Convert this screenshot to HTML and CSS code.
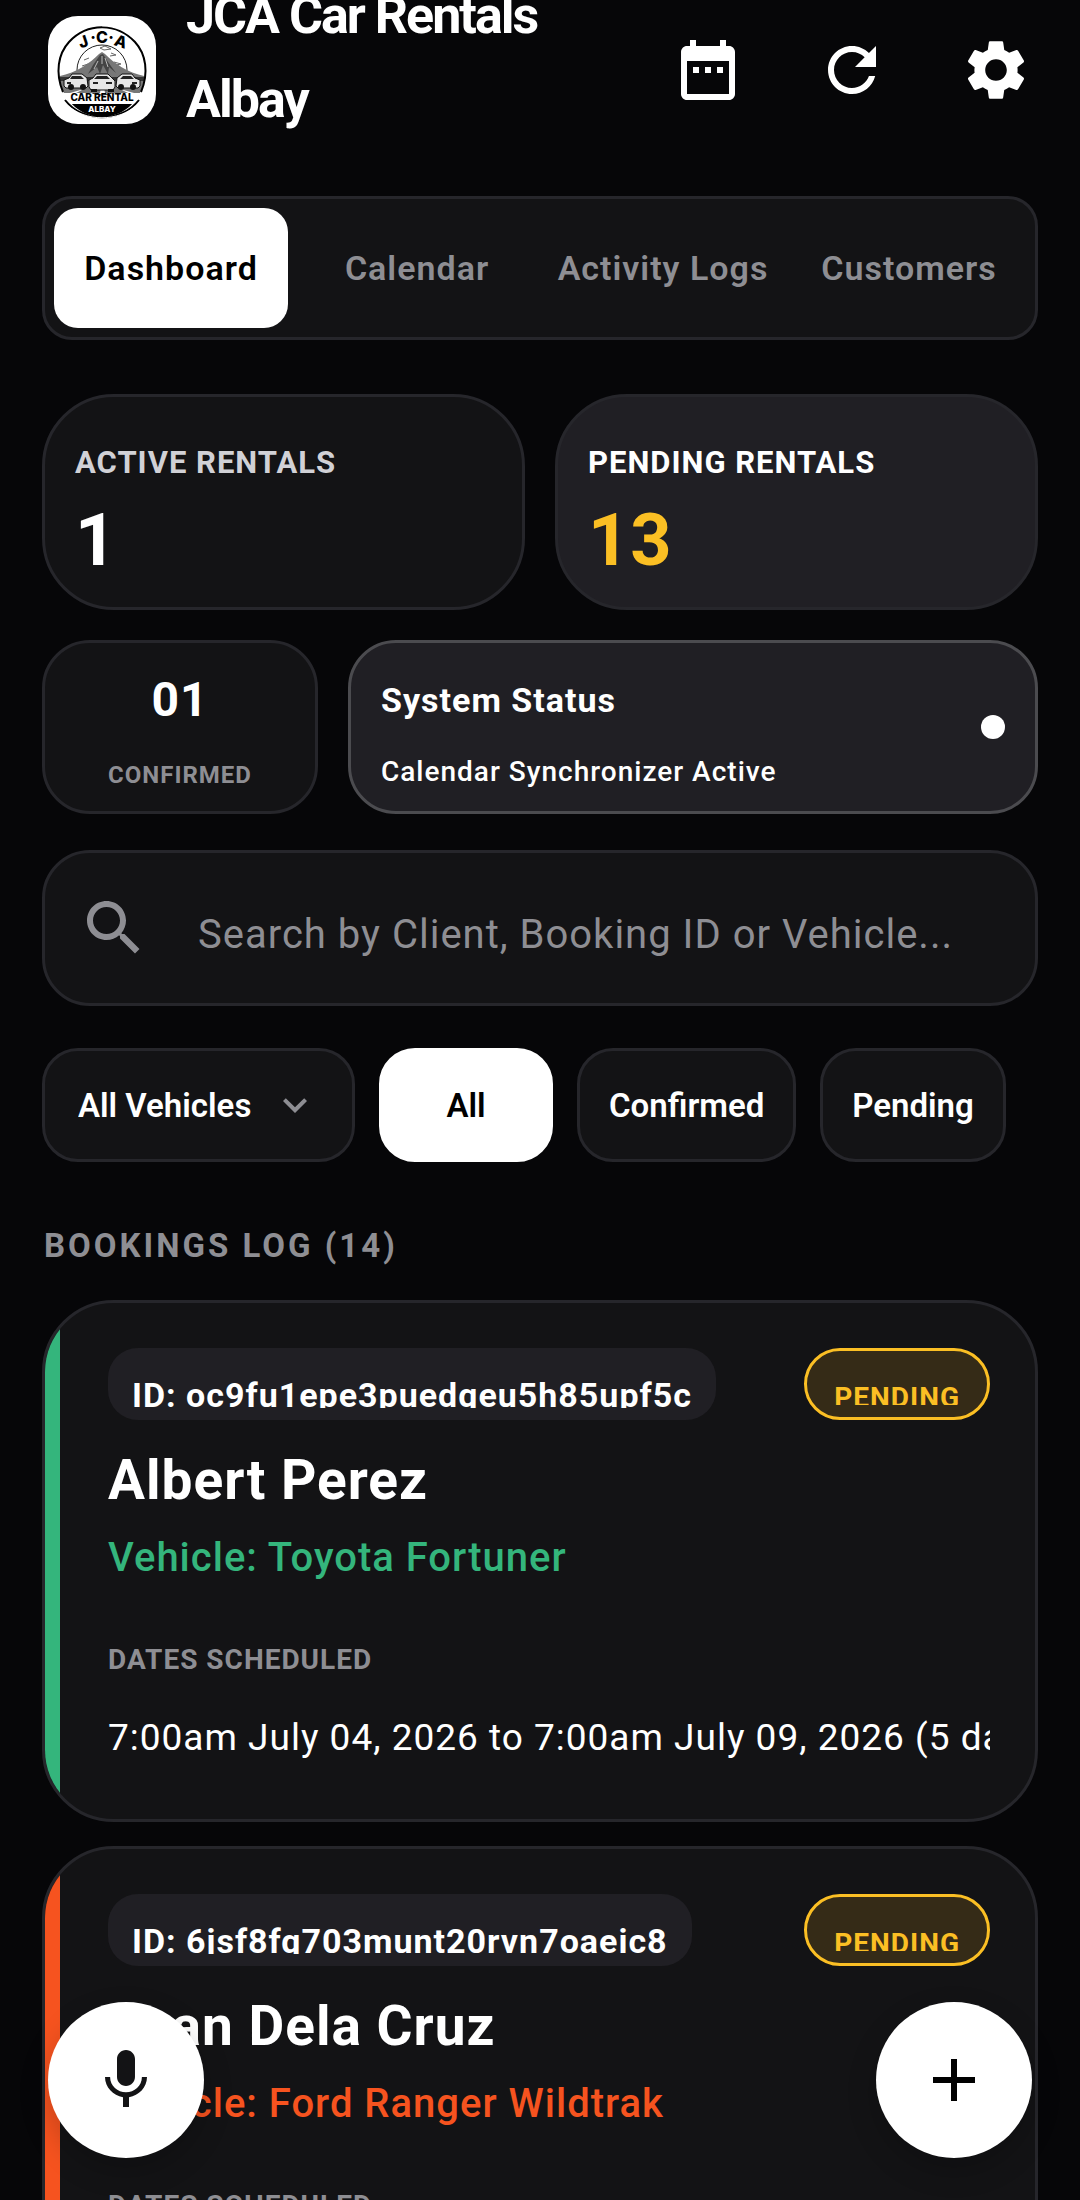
FILE: index.html
```html
<!DOCTYPE html>
<html lang="en">
<head>
    <meta charset="UTF-8">
    <meta name="viewport" content="width=device-width, initial-scale=1.0">
    <title>JCA Car Rentals Albay</title>
    <link rel="stylesheet" href="styles.css">
</head>
<body>
    <div class="app">
        <header class="header">
            <svg class="logo" viewBox="0 0 108 108" role="img" aria-label="JCA Car Rental Albay logo">
                <defs>
                    <clipPath id="badge"><ellipse cx="54" cy="56" rx="43" ry="45"/></clipPath>
                </defs>
                <rect width="108" height="108" fill="#fff"/>
                <circle cx="54" cy="54" r="25" fill="#fff" stroke="#222" stroke-width="1"/>
                <path d="M36 44l5-2M63 37l5 2-6 1M66 46l7 2-5 1M40 48l-6 2M52 32l5-2 6 3-7 1z" fill="none" stroke="#666" stroke-width="1"/>
                <g clip-path="url(#badge)">
                    <path d="M8 61C28 57 41 48 51 38l3-2 3 2c10 10 23 19 43 23v16H8z" fill="#777"/>
                    <path d="M52 39l-7 10-5 9 9-7 3 7 3-9 5 9 1-7 7 6-8-11-5-8z" fill="#444"/>
                    <path d="M50 45l-4 8M57 42l3 9M54 40v8" stroke="#bbb" stroke-width="1"/>
                    <path d="M8 61h92v4H8z" fill="#333"/>
                    <path d="M53 71h3l1 6h-5zM36 73l-14 4h6zM72 73l14 4h-6z" fill="#fff"/>
                    <path d="M8 88h92v20H8z" fill="#000"/>
                </g>
                <g fill="#e6e6e6" stroke="#111" stroke-width="1">
                    <path d="M16 70v-6l5-2 3-4h10l5 4 1 8-2 2H18z"/>
                    <path d="M92 70v-6l-5-2-3-4H74l-5 4-1 8 2 2h20z"/>
                    <path d="M41 71v-7l4-2 3-4h12l4 4 3 3v6l-2 3H43z"/>
                </g>
                <path d="M24 60h9l3 3H22zM75 60h8l3 3H72zM49 60h10l3 3H46zM45 66h5v2h-5zM58 66h6v2h-6zM19 66h4v2h-4zM84 66h5v2h-5z" fill="#222"/>
                <path d="M20 71a3 3 0 1 0 6 0a3 3 0 1 0-6 0M32 71a3 3 0 1 0 6 0a3 3 0 1 0-6 0M43 73h6v3h-6zM60 73h6v3h-6zM70 71a3 3 0 1 0 6 0a3 3 0 1 0-6 0M82 71a3 3 0 1 0 6 0a3 3 0 1 0-6 0" fill="#111"/>
                <path d="M15 76C7 57 10 38 21 26C40 6 69 7 87 26C98 38 101 57 93 76" fill="none" stroke="#000" stroke-width="2"/>
                <path d="M17 84C35 107 73 107 91 84" fill="none" stroke="#000" stroke-width="2"/>
                <path d="M19 89C37 106 71 106 89 89" fill="none" stroke="#fff" stroke-width="1"/>
                <g class="logo-text" text-anchor="middle">
                    <text class="logo-jca" x="37" y="31" transform="rotate(-18 37 31)">J</text>
                    <text class="logo-jca" x="45" y="27">·</text>
                    <text class="logo-jca" x="54" y="27">C</text>
                    <text class="logo-jca" x="63" y="27">·</text>
                    <text class="logo-jca" x="71" y="31" transform="rotate(18 71 31)">A</text>
                    <text class="logo-rental" x="54" y="85">CAR RENTAL</text>
                    <text class="logo-albay" x="54" y="96">ALBAY</text>
                </g>
            </svg>
            <h1 class="title">JCA Car Rentals Albay</h1>
            <button type="button" class="icon-button" aria-label="Calendar">
                <svg class="icon" viewBox="0 0 24 24"><path d="M9 11H7v2h2v-2zm4 0h-2v2h2v-2zm4 0h-2v2h2v-2zm2-7h-1V2h-2v2H8V2H6v2H5c-1.11 0-1.99.9-1.99 2L3 20c0 1.1.89 2 2 2h14c1.1 0 2-.9 2-2V6c0-1.1-.9-2-2-2zm0 16H5V9h14v11z"/></svg>
            </button>
            <button type="button" class="icon-button" aria-label="Refresh">
                <svg class="icon" viewBox="0 0 24 24"><path d="M17.65 6.35C16.2 4.9 14.21 4 12 4c-4.42 0-7.99 3.58-7.99 8s3.57 8 7.99 8c3.73 0 6.84-2.55 7.73-6h-2.08c-.82 2.33-3.04 4-5.65 4-3.31 0-6-2.69-6-6s2.69-6 6-6c1.66 0 3.14.69 4.22 1.78L13 11h7V4l-2.35 2.35z"/></svg>
            </button>
            <button type="button" class="icon-button" aria-label="Settings">
                <svg class="icon" viewBox="0 0 24 24"><path d="M19.14 12.94c.04-.3.06-.61.06-.94 0-.32-.02-.64-.07-.94l2.03-1.58c.18-.14.23-.41.12-.61l-1.92-3.32c-.12-.22-.37-.29-.59-.22l-2.39.96c-.5-.38-1.03-.7-1.62-.94l-.36-2.54c-.04-.24-.24-.41-.48-.41h-3.84c-.24 0-.43.17-.47.41l-.36 2.54c-.59.24-1.13.57-1.62.94l-2.39-.96c-.22-.08-.47 0-.59.22L2.74 8.87c-.12.21-.08.47.12.61l2.03 1.58c-.05.3-.09.63-.09.94s.02.64.07.94l-2.03 1.58c-.18.14-.23.41-.12.61l1.92 3.32c.12.22.37.29.59.22l2.39-.96c.5.38 1.03.7 1.62.94l.36 2.54c.05.24.24.41.48.41h3.84c.24 0 .44-.17.47-.41l.36-2.54c.59-.24 1.13-.56 1.62-.94l2.39.96c.22.08.47 0 .59-.22l1.92-3.32c.12-.22.07-.47-.12-.61l-2.01-1.58zM12 15.6c-1.98 0-3.6-1.62-3.6-3.6s1.62-3.6 3.6-3.6 3.6 1.62 3.6 3.6-1.62 3.6-3.6 3.6z"/></svg>
            </button>
        </header>

        <main class="content">
            <nav class="tabs" aria-label="Sections">
                <button type="button" class="tab active">Dashboard</button>
                <button type="button" class="tab">Calendar</button>
                <button type="button" class="tab">Activity Logs</button>
                <button type="button" class="tab">Customers</button>
            </nav>

            <section class="stats">
                <div class="stat">
                    <div class="stat-label">ACTIVE RENTALS</div>
                    <div class="stat-value">1</div>
                </div>
                <div class="stat pending">
                    <div class="stat-label">PENDING RENTALS</div>
                    <div class="stat-value">13</div>
                </div>
            </section>

            <section class="overview">
                <div class="confirmed">
                    <div class="confirmed-value">01</div>
                    <div class="confirmed-label">CONFIRMED</div>
                </div>
                <div class="status">
                    <div class="status-text">
                        <div class="status-title">System Status</div>
                        <div class="status-detail">Calendar Synchronizer Active</div>
                    </div>
                    <span class="status-dot"></span>
                </div>
            </section>

            <label class="search">
                <svg class="icon" viewBox="0 0 24 24" aria-hidden="true"><path d="M15.5 14h-.79l-.28-.27C15.41 12.59 16 11.11 16 9.5 16 5.91 13.09 3 9.5 3S3 5.91 3 9.5 5.91 16 9.5 16c1.61 0 3.09-.59 4.23-1.57l.27.28v.79l5 4.99L20.49 19l-4.99-5zm-6 0C7.01 14 5 11.99 5 9.5S7.01 5 9.5 5 14 7.01 14 9.5 11.99 14 9.5 14z"/></svg>
                <input type="text" class="search-input" aria-label="Search bookings" placeholder="Search by Client, Booking ID or Vehicle...">
            </label>

            <div class="filters">
                <div class="vehicle-filter">
                    <select class="vehicle-select" aria-label="Vehicle">
                        <option>All Vehicles</option>
                    </select>
                    <svg class="chevron" viewBox="0 0 24 24" aria-hidden="true"><path d="M7.41 8.59L12 13.17l4.59-4.58L18 10l-6 6-6-6 1.41-1.41z"/></svg>
                </div>
                <button type="button" class="chip active">All</button>
                <button type="button" class="chip">Confirmed</button>
                <button type="button" class="chip">Pending</button>
            </div>

            <h2 class="section-title">BOOKINGS LOG (14)</h2>

            <article class="booking green">
                <div class="booking-top">
                    <div class="booking-id"><span>ID: oc9fu1epe3puedqeu5h85upf5c</span></div>
                    <div class="badge"><span>PENDING</span></div>
                </div>
                <h3 class="client">Albert Perez</h3>
                <div class="vehicle">Vehicle: Toyota Fortuner</div>
                <div class="dates-label">DATES SCHEDULED</div>
                <div class="dates">7:00am July 04, 2026 to 7:00am July 09, 2026 (5 days)</div>
            </article>

            <article class="booking orange">
                <div class="booking-top">
                    <div class="booking-id"><span>ID: 6jsf8fq703munt20rvn7oaeic8</span></div>
                    <div class="badge"><span>PENDING</span></div>
                </div>
                <h3 class="client">Juan Dela Cruz</h3>
                <div class="vehicle">Vehicle: Ford Ranger Wildtrak</div>
                <div class="dates-label">DATES SCHEDULED</div>
            </article>
        </main>

        <button type="button" class="fab fab-left" aria-label="Voice input">
            <svg class="icon" viewBox="0 0 24 24"><path d="M12 14c1.66 0 2.99-1.34 2.99-3L15 5c0-1.66-1.34-3-3-3S9 3.34 9 5v6c0 1.66 1.34 3 3 3zm5.3-3c0 3-2.54 5.1-5.3 5.1S6.7 14 6.7 11H5c0 3.41 2.72 6.23 6 6.72V21h2v-3.28c3.28-.48 6-3.3 6-6.72h-1.7z"/></svg>
        </button>
        <button type="button" class="fab fab-right" aria-label="Add booking">
            <svg class="icon" viewBox="0 0 24 24"><path d="M19 13h-6v6h-2v-6H5v-2h6V5h2v6h6v2z"/></svg>
        </button>
    </div>
</body>
</html>
```
FILE: styles.css
```css
* {
    box-sizing: border-box;
}
body {
    margin: 0;
    background-color: #060608;
    color: #fff;
    font-family: Roboto, "Liberation Sans", sans-serif;
}
h1, h2, h3 {
    margin: 0;
}
button, input, select {
    margin: 0;
    font-family: inherit;
}
button {
    cursor: pointer;
}
.app {
    height: 100vh;
    overflow: hidden;
}
.icon {
    width: 72px;
    height: 72px;
    flex: none;
    fill: currentColor;
}

/* Header */
.header {
    display: flex;
    align-items: center;
    height: 140px;
    padding: 0 12px 0 48px;
}
.logo {
    width: 108px;
    height: 108px;
    flex: none;
    border-radius: 30px;
}
.logo-text {
    font-family: Inter, "Open Sans", sans-serif;
    font-weight: 800;
}
.logo-jca {
    font-size: 16px;
}
.logo-rental {
    font-size: 10px;
}
.logo-albay {
    font-size: 8px;
    fill: #fff;
}
.title {
    flex: 1;
    margin: 0 0 24px 30px;
    font-size: 52px;
    font-weight: 700;
    line-height: 84px;
    letter-spacing: -2px;
}
.icon-button {
    display: flex;
    align-items: center;
    justify-content: center;
    width: 144px;
    height: 140px;
    padding: 0;
    border: none;
    background: none;
    color: #fff;
}

.content {
    padding: 56px 42px 0;
}

/* Tabs */
.tabs {
    display: grid;
    grid-template-columns: repeat(4, 1fr);
    gap: 12px;
    padding: 9px;
    border: 3px solid #26262b;
    border-radius: 30px;
    background-color: #131315;
}
.tab {
    height: 120px;
    padding: 0;
    border: none;
    border-radius: 24px;
    background: none;
    color: #8e8e93;
    font-size: 34px;
    font-weight: 600;
    letter-spacing: 1px;
    white-space: nowrap;
}
.tab.active {
    background-color: #fff;
    color: #000;
}

/* Stat cards */
.stats {
    display: grid;
    grid-template-columns: 1fr 1fr;
    gap: 30px;
    margin-top: 54px;
}
.stat {
    padding: 30px 30px 24px;
    border: 3px solid #26262b;
    border-radius: 72px;
    background-color: #131315;
}
.stat-label {
    color: #d1d1d6;
    font-size: 31px;
    font-weight: 700;
    line-height: 72px;
    letter-spacing: 1px;
}
.stat-value {
    font-size: 72px;
    font-weight: 700;
    line-height: 84px;
    letter-spacing: 1px;
}
.stat.pending {
    background-color: #201f24;
}
.stat.pending .stat-label {
    color: #fff;
}
.stat.pending .stat-value {
    color: #fbbf24;
}

.overview {
    display: grid;
    grid-template-columns: 2fr 5fr;
    gap: 30px;
    margin-top: 30px;
}
.confirmed {
    padding-top: 21px;
    border: 3px solid #26262b;
    border-radius: 48px;
    background-color: #131315;
    text-align: center;
}
.confirmed-value {
    font-size: 48px;
    font-weight: 700;
    line-height: 72px;
    letter-spacing: 1px;
}
.confirmed-label {
    margin-top: 3px;
    color: #8e8e93;
    font-size: 24px;
    font-weight: 700;
    line-height: 72px;
    letter-spacing: 1px;
}
.status {
    display: flex;
    align-items: center;
    justify-content: space-between;
    padding: 0 30px;
    border: 3px solid #4b4b4f;
    border-radius: 48px;
    background-color: #201f24;
}
.status-text {
    padding-top: 18px;
}
.status-title {
    font-size: 34px;
    font-weight: 700;
    line-height: 72px;
    letter-spacing: 1px;
}
.status-detail {
    font-size: 28px;
    font-weight: 500;
    line-height: 72px;
    letter-spacing: 1px;
}
.status-dot {
    width: 24px;
    height: 24px;
    border-radius: 50%;
    background-color: #fff;
}

/* Search */
.search {
    display: flex;
    align-items: center;
    height: 156px;
    margin-top: 36px;
    padding: 0 33px;
    border: 3px solid #26262b;
    border-radius: 48px;
    background-color: #131315;
    color: #8e8e93;
}
.search-input {
    flex: 1;
    min-width: 0;
    margin-left: 48px;
    padding: 12px 0 0;
    border: none;
    outline: none;
    background: none;
    color: #fff;
    font-size: 40px;
    letter-spacing: 1px;
}
.search-input::placeholder {
    color: #8e8e93;
    opacity: 1;
}

/* Filters */
.filters {
    display: flex;
    gap: 24px;
    margin-top: 42px;
}
.vehicle-filter {
    display: grid;
    align-items: center;
}
.vehicle-select,
.chip {
    height: 114px;
    border: 3px solid #26262b;
    border-radius: 36px;
    background-color: #131315;
    color: #fff;
    font-size: 33px;
    font-weight: 600;
}
.vehicle-select {
    grid-area: 1 / 1;
    padding: 0 100px 0 33px;
    appearance: none;
}
.chevron {
    grid-area: 1 / 1;
    justify-self: end;
    width: 48px;
    height: 48px;
    margin-right: 36px;
    fill: #8e8e93;
    pointer-events: none;
}
.chip {
    padding: 0 29px;
}
.chip.active {
    min-width: 174px;
    border-color: #fff;
    background-color: #fff;
    color: #000;
}

/* Bookings */
.section-title {
    margin: 60px 0 30px;
    padding-left: 2px;
    color: #8e8e93;
    font-size: 33px;
    font-weight: 700;
    line-height: 48px;
    letter-spacing: 3px;
}
.booking {
    position: relative;
    margin-bottom: 24px;
    padding: 45px 45px 39px 63px;
    border: 3px solid #26262b;
    border-radius: 72px;
    background-color: #131315;
    overflow: hidden;
}
.booking::before {
    content: "";
    position: absolute;
    top: 0;
    bottom: 0;
    left: 0;
    width: 15px;
    background-color: currentColor;
}
.booking.green {
    color: #34b57c;
}
.booking.orange {
    color: #f6531f;
}
.booking-top {
    display: flex;
    justify-content: space-between;
    margin-bottom: 18px;
}
.booking-id,
.badge {
    height: 72px;
    line-height: 70px;
    font-weight: 700;
}
.booking-id {
    padding: 12px 24px;
    border-radius: 30px;
    background-color: #201f24;
    color: #fff;
    font-size: 34px;
    letter-spacing: 1px;
}
.badge {
    padding: 12px 27px;
    border: 3px solid #fbbf24;
    border-radius: 36px;
    background-color: #352b17;
    color: #fbbf24;
    font-size: 28px;
    letter-spacing: 1px;
}
.booking-id span,
.badge span {
    display: block;
    height: 100%;
    overflow: hidden;
}
.client {
    color: #fff;
    font-size: 55px;
    font-weight: 700;
    line-height: 84px;
    letter-spacing: 1px;
}
.vehicle {
    font-size: 40px;
    font-weight: 500;
    line-height: 72px;
    letter-spacing: 1px;
}
.dates-label {
    margin-top: 30px;
    color: #8e8e93;
    font-size: 28px;
    font-weight: 700;
    line-height: 72px;
    letter-spacing: 1px;
}
.dates {
    color: #fff;
    font-size: 37px;
    line-height: 84px;
    letter-spacing: 1px;
    white-space: nowrap;
    overflow: hidden;
}

/* Floating buttons */
.fab {
    position: fixed;
    bottom: 42px;
    display: flex;
    align-items: center;
    justify-content: center;
    width: 156px;
    height: 156px;
    padding: 0;
    border: none;
    border-radius: 50%;
    background-color: #fff;
    color: #000;
    box-shadow: 0 12px 30px rgba(0, 0, 0, 0.2);
}
.fab-left {
    left: 48px;
    color: #131315;
}
.fab-right {
    right: 48px;
}
```
